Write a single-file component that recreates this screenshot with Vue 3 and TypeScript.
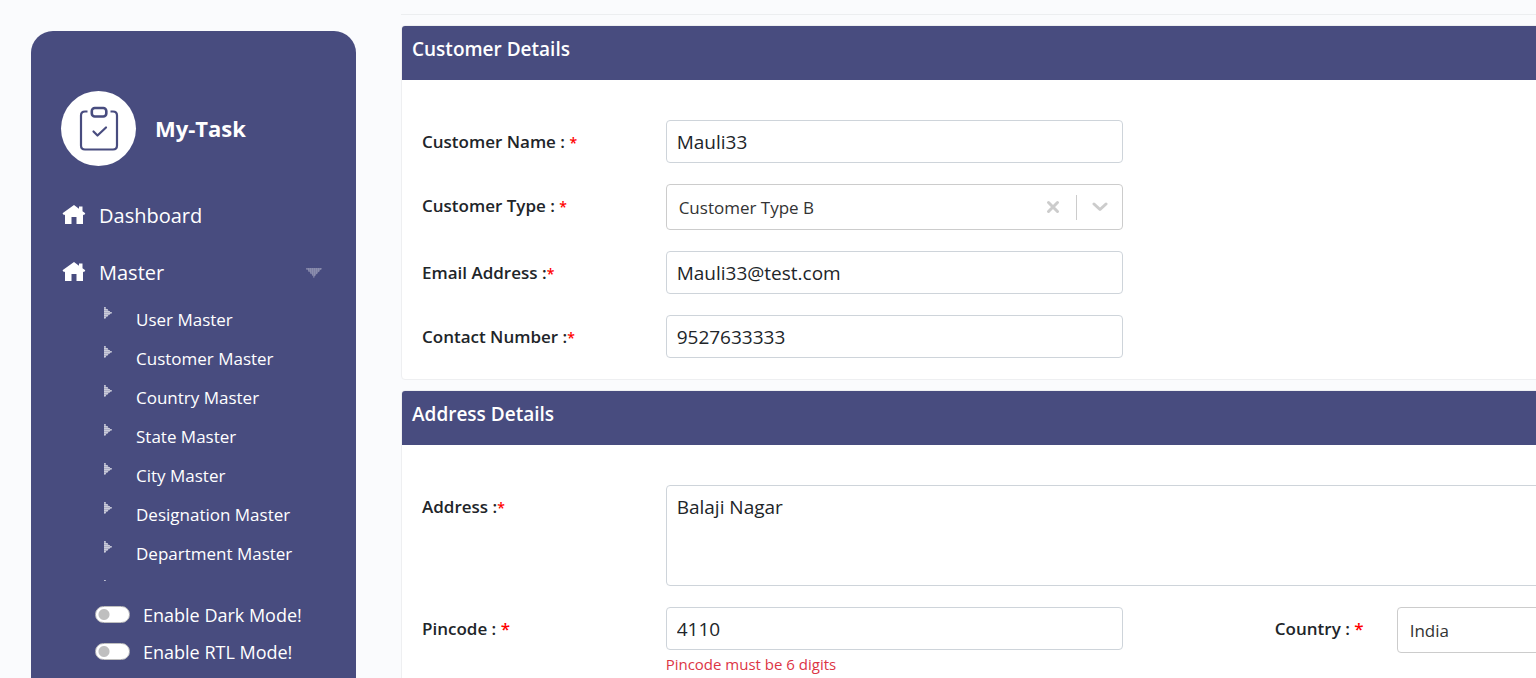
<script setup lang="ts">
import { ref } from 'vue'

const masters = ['User Master', 'Customer Master', 'Country Master', 'State Master', 'City Master', 'Designation Master', 'Department Master', 'Role Master']
const darkMode = ref(false)
const rtlMode = ref(false)

const customerName = ref('Mauli33')
const customerType = ref('Customer Type B')
const email = ref('Mauli33@test.com')
const contact = ref('9527633333')
const address = ref('Balaji Nagar')
const pincode = ref('4110')
const country = ref('India')
</script>

<template>
  <div class="shell">
    <aside class="sidebar">
      <a class="brand" href="#">
        <span class="brand-mark">
          <svg width="41" height="45" viewBox="-1 -1 41 45" fill="none" stroke="#484c7f" stroke-linecap="round" stroke-linejoin="round">
            <path d="M8.500 4.500H6Q2 4.500 2 8.500V38.500Q2 42.500 6 42.500H34Q38 42.500 38 38.500V8.500Q38 4.500 34 4.500H31.500" stroke-width="2.200" stroke-linecap="butt" />
            <rect x="12.800" y="1" width="14.500" height="8.500" rx="3" stroke-width="2.600" />
            <path d="M14.500 24.500L18.500 28.500L27 20.500" stroke-width="2.200" />
          </svg>
        </span>
        <span class="brand-name">My-Task</span>
      </a>

      <nav class="menu">
        <a class="menu-link" href="#">
          <svg class="home" width="24" height="20" viewBox="0 0 24 20" fill="#fff"><path d="M12 0L0.500 8.300L2 10.300L3 9.600V19H9.500V12H14.500V19H21V9.600L22 10.300L23.300 8.300L20.500 6.200V1.500H17V3.700Z" /></svg>
          <span>Dashboard</span>
        </a>
        <a class="menu-link" href="#">
          <svg class="home" width="24" height="20" viewBox="0 0 24 20" fill="#fff"><path d="M12 0L0.500 8.300L2 10.300L3 9.600V19H9.500V12H14.500V19H21V9.600L22 10.300L23.300 8.300L20.500 6.200V1.500H17V3.700Z" /></svg>
          <span>Master</span>
          <svg class="caret" width="16" height="10" viewBox="0 0 16 10" stroke="#fff" stroke-opacity=".25" stroke-dasharray="1.500 .5" stroke-width="1.500">
            <path d="M0 0H16L8 9Z" fill="#fff" fill-opacity=".22" stroke="none" />
            <path d="M0 1H16M2 3H14M4 5H12M6 7H10M7 9H9" />
          </svg>
        </a>
        <ul class="submenu">
          <li v-for="item in masters" :key="item">
            <a href="#">
              <svg class="bullet" width="8" height="12" viewBox="0 0 8 12" stroke="#fff" stroke-opacity=".7" stroke-dasharray="1.500 .5" stroke-width="1.500">
                <path d="M0 0L7.500 6L0 12Z" fill="#fff" fill-opacity=".4" stroke="none" />
                <path d="M1 0V12M3 2V10M5 4V8M7 5V7" />
              </svg>
              <span>{{ item }}</span>
            </a>
          </li>
        </ul>
      </nav>

      <div class="modes">
        <label class="mode"><input v-model="darkMode" type="checkbox" role="switch" /><span>Enable Dark Mode!</span></label>
        <label class="mode"><input v-model="rtlMode" type="checkbox" role="switch" /><span>Enable RTL Mode!</span></label>
      </div>
    </aside>

    <main class="content">
      <hr class="rule" />
      <section class="card">
        <h2 class="card-head">Customer Details</h2>
        <form class="card-body" @submit.prevent>
          <div class="row">
            <label class="label" for="name">Customer Name : <small>*</small></label>
            <div class="field"><input id="name" v-model="customerName" class="control" type="text" /></div>
          </div>
          <div class="row">
            <label class="label" for="type">Customer Type : <small>*</small></label>
            <div class="field">
              <div class="picker">
                <select id="type" v-model="customerType">
                  <option value=""></option>
                  <option>Customer Type A</option>
                  <option>Customer Type B</option>
                </select>
                <button class="clear" type="button" aria-label="Clear" @click="customerType = ''">
                  <svg width="14" height="14" viewBox="0 0 14 14" stroke="#ccc" stroke-width="3" stroke-linecap="round"><path d="M2.500 2.500L11.500 11.500M11.500 2.500L2.500 11.500" /></svg>
                </button>
                <span class="bar"></span>
                <svg class="chevron" width="16" height="10" viewBox="0 0 16 10" fill="none" stroke="#ccc" stroke-width="3" stroke-linecap="round" stroke-linejoin="round"><path d="M2 2L8 7.500L14 2" /></svg>
              </div>
            </div>
          </div>
          <div class="row">
            <label class="label" for="email">Email Address :<small>*</small></label>
            <div class="field"><input id="email" v-model="email" class="control" type="email" /></div>
          </div>
          <div class="row">
            <label class="label" for="contact">Contact Number :<small>*</small></label>
            <div class="field"><input id="contact" v-model="contact" class="control" type="text" /></div>
          </div>
        </form>
      </section>

      <section class="card">
        <h2 class="card-head">Address Details</h2>
        <form class="card-body" @submit.prevent>
          <div class="row">
            <label class="label" for="address">Address :<small>*</small></label>
            <div class="field wide"><textarea id="address" v-model="address" class="control area"></textarea></div>
          </div>
          <div class="row">
            <label class="label" for="pincode">Pincode : <span class="star">*</span></label>
            <div class="field">
              <input id="pincode" v-model="pincode" class="control" type="text" aria-describedby="pincode-error" />
              <p id="pincode-error" class="error">Pincode must be 6 digits</p>
            </div>
            <label class="label second" for="country">Country : <span class="star">*</span></label>
            <div class="field">
              <div class="picker">
                <select id="country" v-model="country">
                  <option>India</option>
                </select>
                <span class="bar"></span>
                <svg class="chevron" width="16" height="10" viewBox="0 0 16 10" fill="none" stroke="#ccc" stroke-width="3" stroke-linecap="round" stroke-linejoin="round"><path d="M2 2L8 7.500L14 2" /></svg>
              </div>
            </div>
          </div>
        </form>
      </section>
    </main>
  </div>
</template>

<style>
body {
  margin: 0;
  background: #fafbfd;
}
</style>

<style scoped>
* {
  box-sizing: border-box;
}
.shell {
  display: flex;
  gap: 45px;
  height: 100vh;
  overflow: hidden;
  padding-left: 31px;
  background: #fafbfd;
  color: #212529;
  font-family: "Segoe UI", "Open Sans", "Noto Sans", sans-serif;
}
.sidebar {
  flex: 0 0 325px;
  display: flex;
  flex-direction: column;
  margin-top: 31px;
  padding: 60px 30px 8px;
  border-radius: 22px 22px 0 0;
  background: #484c7f;
  color: #fff;
}
.sidebar a {
  color: #fff;
  text-decoration: none;
}
.brand {
  display: flex;
  align-items: center;
  gap: 19px;
}
.brand-mark {
  display: flex;
  align-items: center;
  justify-content: center;
  width: 75px;
  height: 75px;
  border-radius: 50%;
  background: #fff;
}
.brand-name {
  padding-bottom: 2px;
  font-size: 22px;
  font-weight: 700;
}
.menu {
  flex: 1;
  min-height: 0;
  overflow: hidden;
  margin: 21px 0 15px;
}
.menu-link {
  display: flex;
  align-items: center;
  gap: 13px;
  height: 57px;
  padding: 0 4px 0 1px;
  font-size: 20px;
}
.home {
  margin-bottom: 2px;
}
.caret {
  margin-left: auto;
}
.submenu {
  margin: 0;
  padding: 0 0 0 43px;
  list-style: none;
}
.submenu a {
  display: flex;
  gap: 24px;
  height: 39px;
  font-size: 17px;
  line-height: 37px;
}
.bullet {
  margin-top: 6px;
}
.modes {
  display: flex;
  flex-direction: column;
  padding-left: 34px;
}
.mode {
  display: flex;
  align-items: center;
  gap: 13px;
  height: 37px;
  font-size: 18px;
}
.mode input {
  appearance: none;
  width: 35px;
  height: 17px;
  margin: 0;
  border: 1px solid #bfbfbf;
  border-radius: 9px;
  background: radial-gradient(circle at 8px 50%, #bfbfbf 5px, #fff 6px);
}
.mode input:checked {
  background: radial-gradient(circle at 25px 50%, #484c7f 5px, #fff 6px);
}
.content {
  flex: 0 0 calc(100vw - 67px);
}
.rule {
  height: 1px;
  margin: 14px 0 10px;
  border: 0;
  background: #eceef0;
}
.card {
  margin-bottom: 10px;
  border: 1px solid #eeeff1;
  border-radius: 4px;
  background: #fff;
  overflow: hidden;
}
.card-head {
  height: 54px;
  margin: 0;
  padding: 8px 10px;
  background: #484c7f;
  color: #fff;
  font-size: 19px;
  font-weight: 600;
  line-height: 30px;
}
.card-body {
  display: flex;
  flex-direction: column;
  gap: 21px;
  padding: 40px 0 21px 5px;
}
.row {
  display: grid;
  grid-template-columns: repeat(12, 1fr);
  align-items: start;
}
.label {
  grid-column: span 2;
  padding: 7px 0 0 15px;
  font-size: 17px;
  font-weight: 600;
  line-height: 30px;
}
.label.second {
  grid-column: 8 / span 1;
  white-space: nowrap;
}
.label small {
  color: #f00;
  font-size: 14px;
}
.star {
  color: #f00;
}
.field {
  grid-column: span 4;
  padding: 0 15px;
}
.field.wide {
  grid-column: span 10;
}
.control {
  display: block;
  width: 100%;
  height: 43px;
  padding: 0 10px;
  border: 1px solid #ced4da;
  border-radius: 4px;
  background: #fff;
  color: #212529;
  font: 400 19px/30px "Segoe UI", "Open Sans", "Noto Sans", sans-serif;
}
.area {
  height: 101px;
  padding: 6px 10px;
  resize: none;
}
.picker {
  display: flex;
  align-items: center;
  height: 46px;
  border: 1px solid #ccc;
  border-radius: 4px;
  background: #fff;
}
.picker select {
  appearance: none;
  flex: 1;
  min-width: 0;
  height: 100%;
  padding: 0 12px;
  border: 0;
  background: transparent;
  color: #333;
  font: 400 17px "Segoe UI", "Open Sans", "Noto Sans", sans-serif;
}
.clear {
  display: flex;
  margin-right: 16px;
  padding: 0;
  border: 0;
  background: none;
}
.bar {
  width: 1px;
  height: 25px;
  background: #ccc;
}
.chevron {
  margin: 0 14px 0 15px;
}
.error {
  margin: 0;
  color: #dc3545;
  font-size: 15px;
  line-height: 28px;
}
</style>
